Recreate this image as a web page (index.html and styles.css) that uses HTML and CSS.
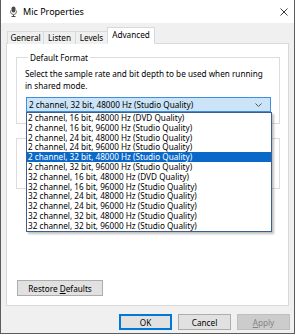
FILE: index.html
```html
<!DOCTYPE html>
<html lang="en">
<head>
    <meta charset="UTF-8">
    <title>Mic Properties</title>
    <link rel="stylesheet" href="styles.css">
</head>
<body>
    <div class="window">
        <div class="titlebar">
            <svg class="app-icon" width="7" height="11" viewBox="0 0 7 11">
                <rect x="1.5" y="0.5" width="4" height="6" rx="2" fill="#4a4a4a"/>
                <path d="M0.5 4.5 v1 a3 3 0 0 0 6 0 v-1" fill="none" stroke="#6a6a6a"/>
                <path d="M3.5 8.5 v2 M1.5 10.5 h4" stroke="#4a4a4a"/>
            </svg>
            <span class="title">Mic Properties</span>
            <svg class="close" width="8" height="8" viewBox="0 0 8 8">
                <path d="M0.5 0.5 L7.5 7.5 M7.5 0.5 L0.5 7.5" stroke="#222" stroke-width="0.9"/>
            </svg>
        </div>

        <div class="tabs">
            <div class="tab general">General</div>
            <div class="tab listen">Listen</div>
            <div class="tab levels">Levels</div>
            <div class="tab advanced active">Advanced</div>
        </div>

        <div class="panel">
            <fieldset class="group">
                <legend>Default Format</legend>
                <p class="hint">Select the sample rate and bit depth to be used when running in shared mode.</p>
                <div class="combo">
                    <div class="combo-box">
                        <span>2 channel, 32 bit, 48000 Hz (Studio Quality)</span>
                        <svg class="chevron" width="7" height="4" viewBox="0 0 7 4">
                            <path d="M0.5 0.5 L3.5 3.5 L6.5 0.5" fill="none" stroke="#555"/>
                        </svg>
                    </div>
                    <ul class="options" id="options"></ul>
                </div>
            </fieldset>

            <fieldset class="group second">
                <legend>Exclusive Mode</legend>
            </fieldset>

            <button class="btn restore">Restore <u>D</u>efaults</button>
        </div>

        <div class="actions">
            <button class="btn default">OK</button>
            <button class="btn">Cancel</button>
            <button class="btn" disabled><u>A</u>pply</button>
        </div>
    </div>

    <script>
        const formats = [
            '2 channel, 16 bit, 48000 Hz (DVD Quality)',
            '2 channel, 16 bit, 96000 Hz (Studio Quality)',
            '2 channel, 24 bit, 48000 Hz (Studio Quality)',
            '2 channel, 24 bit, 96000 Hz (Studio Quality)',
            '2 channel, 32 bit, 48000 Hz (Studio Quality)',
            '2 channel, 32 bit, 96000 Hz (Studio Quality)',
            '32 channel, 16 bit, 48000 Hz (DVD Quality)',
            '32 channel, 16 bit, 96000 Hz (Studio Quality)',
            '32 channel, 24 bit, 48000 Hz (Studio Quality)',
            '32 channel, 24 bit, 96000 Hz (Studio Quality)',
            '32 channel, 32 bit, 48000 Hz (Studio Quality)',
            '32 channel, 32 bit, 96000 Hz (Studio Quality)'
        ];
        const selected = 4; // current default format

        const list = document.getElementById('options');
        formats.forEach((text, i) => {
            const li = document.createElement('li');
            li.innerText = text;
            if (i === selected) li.className = 'selected';
            list.appendChild(li);
        });
    </script>
</body>
</html>
```

FILE: styles.css
```css
body {
    margin: 0;
    font-family: "Noto Sans", "Open Sans", sans-serif;
    font-size: 8.2px;
    color: #000;
}
.window {
    width: 293px;
    height: 333px;
    border: 1px solid #5c5c5c;
    border-top: none;
    background-color: #f0f0f0;
    display: flex;
    flex-direction: column;
}
.titlebar {
    height: 23px;
    background-color: #ffffff;
    display: flex;
    align-items: center;
    padding: 0 6px 0 9px;
}
.app-icon {
    margin-right: 6px;
}
.title {
    flex: 1;
    font-size: 9px;
}

/* tabs */
.tabs {
    display: flex;
    align-items: flex-end;
    height: 15px;
    margin-top: 6px;
    padding-left: 6px;
    margin-bottom: -1px;
    position: relative;
    z-index: 1;
}
.tab {
    height: 12px;
    line-height: 12px;
    text-align: center;
    border: 1px solid #d9d9d9;
    border-bottom: none;
    margin-right: -1px;
    background-color: #f0f0f0;
}
.tab.general { width: 35px; }
.tab.listen { width: 31px; }
.tab.levels { width: 31px; }
.tab.advanced { width: 46px; }
.tab.active {
    height: 15px;
    line-height: 14px;
    background-color: #ffffff;
    border-bottom: 1px solid #ffffff;
}

.panel {
    margin: 0 5px 0 5px;
    height: 261px;
    background-color: #ffffff;
    border: 1px solid #d9d9d9;
    display: flex;
    flex-direction: column;
    align-items: flex-start;
}

/* group boxes */
.group {
    width: 246px;
    margin: 8px 0 0 9px;
    padding: 5px 8px 11px 8px;
    border: 1px solid #dcdcdc;
    min-width: 0;
}
.group legend {
    padding: 0 2px;
    margin-left: 3px;
    line-height: 11px;
}
.group.second {
    margin-top: 9px;
    height: 38px;
}
.hint {
    margin: 0 0 5px 0;
    line-height: 12px;
}

/* combo box */
.combo {
    position: relative;
    margin-left: 1px;
}
.combo-box {
    height: 13px;
    border: 1px solid #3d8de0;
    background-color: #cce4f7;
    display: flex;
    align-items: center;
    justify-content: space-between;
    padding: 0 8px 0 2px;
}
.options {
    position: absolute;
    top: 100%;
    left: 0;
    width: 244px;
    margin: 0;
    padding: 0;
    list-style: none;
    background-color: #ffffff;
    border: 1px solid #3c5f8c;
    box-shadow: 2px 2px 2px rgba(0, 0, 0, 0.25);
    z-index: 2;
}
.options li {
    height: 9.8px;
    line-height: 9.8px;
    padding-left: 1px;
    white-space: nowrap;
}
.options li.selected {
    background-color: #0a68c8;
    color: #ffffff;
}

/* buttons */
.btn {
    font-family: inherit;
    font-size: 8.2px;
    height: 16px;
    padding: 0;
    background-color: #e1e1e1;
    border: 1px solid #adadad;
    border-radius: 0;
    color: #000;
}
.restore {
    width: 86px;
    margin: auto 0 9px 10px;
}
.actions {
    display: flex;
    justify-content: flex-end;
    gap: 6px;
    margin-top: 8px;
    padding-right: 4px;
}
.actions .btn {
    width: 53px;
}
.btn.default {
    border: 1px solid #0078d7;
    box-shadow: inset 0 0 0 1px #0078d7;
}
.btn:disabled {
    background-color: #cccccc;
    border-color: #bfbfbf;
    color: #838383;
}
```
